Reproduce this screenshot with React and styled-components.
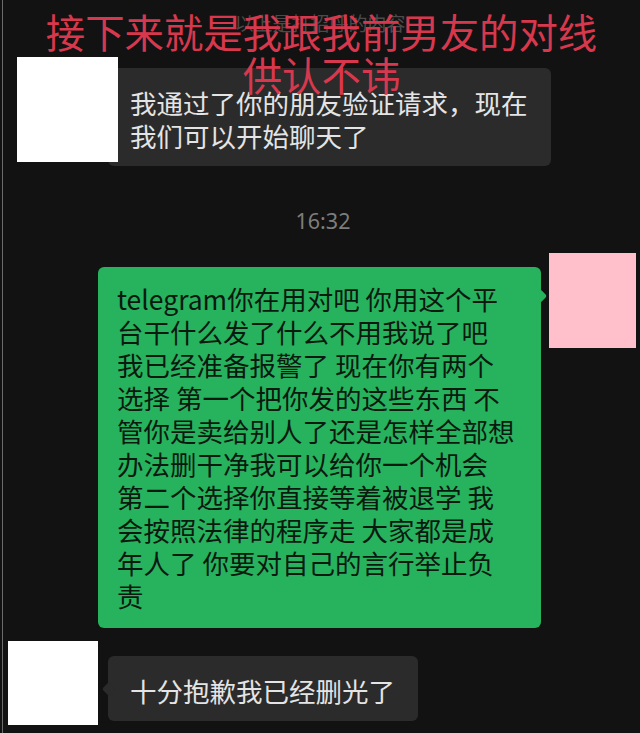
import React from "react";
import styled, { createGlobalStyle } from "styled-components";

const GREEN_LINES = [
  "telegram你在用对吧 你用这个平",
  "台干什么发了什么不用我说了吧",
  "我已经准备报警了 现在你有两个",
  "选择 第一个把你发的这些东西 不",
  "管你是卖给别人了还是怎样全部想",
  "办法删干净我可以给你一个机会",
  "第二个选择你直接等着被退学 我",
  "会按照法律的程序走 大家都是成",
  "年人了 你要对自己的言行举止负",
  "责",
];

const withBreaks = (lines) =>
  lines.map((line, i) => (
    <React.Fragment key={i}>
      {line}
      {i < lines.length - 1 && <br />}
    </React.Fragment>
  ));

export default function App() {
  return (
    <>
      <GlobalStyle />
      <Frame>
        <Caption>
          <CaptionLine>接下来就是我跟我前男友的对线</CaptionLine>
          <CaptionLine>供认不讳</CaptionLine>
        </Caption>

        <SystemNote>以上是打招呼的内容</SystemNote>

        <Row $top={22} $padLeft={17}>
          <Avatar $w={101} $h={105} $color="#ffffff" />
          <Bubble $tone="dark" $w={443} $top={11} $overlap={10}>
            {withBreaks(["我通过了你的朋友验证请求，现在", "我们可以开始聊天了"])}
          </Bubble>
        </Row>

        <TimeStamp>16:32</TimeStamp>

        <Row $top={20} $right $padRight={4}>
          <Bubble $tone="green" $w={443} $top={14}>
            {withBreaks(GREEN_LINES)}
          </Bubble>
          <Avatar $w={87} $h={95} $color="#ffc0cb" />
        </Row>

        <Row $top={13} $padLeft={8}>
          <Avatar $w={90} $h={84} $color="#ffffff" />
          <Bubble $tone="dark" $w={310} $top={15} $tail>
            十分抱歉我已经删光了
          </Bubble>
        </Row>
      </Frame>
    </>
  );
}

const GlobalStyle = createGlobalStyle`
  html, body {
    margin: 0;
    padding: 0;
    background: #121212;
  }
  body {
    font-family: "Noto Sans CJK SC", "Noto Sans", sans-serif;
  }
`;

const Frame = styled.div`
  position: relative;
  display: flex;
  flex-direction: column;
  width: 640px;
  height: 733px;
  overflow: hidden;
  background-color: #121212;

  &::before {
    content: "";
    position: absolute;
    left: 2px;
    top: 0;
    bottom: 0;
    width: 1px;
    background-color: #6c6c6c;
  }
`;

const Caption = styled.div`
  position: absolute;
  top: 9px;
  left: 3px;
  right: 0;
  z-index: 5;
  display: flex;
  flex-direction: column;
  align-items: center;
  pointer-events: none;
`;

const CaptionLine = styled.div`
  font-family: "Noto Sans CJK SC", sans-serif;
  font-size: 39.4px;
  line-height: 43px;
  color: #d8384d;
  white-space: nowrap;
`;

const SystemNote = styled.div`
  margin-top: 11px;
  text-align: center;
  font-size: 19px;
  line-height: 24px;
  color: #4a4a4a;
`;

const Row = styled.div`
  display: flex;
  align-items: flex-start;
  justify-content: ${(p) => (p.$right ? "flex-end" : "flex-start")};
  margin-top: ${(p) => p.$top}px;
  padding-left: ${(p) => p.$padLeft || 0}px;
  padding-right: ${(p) => p.$padRight || 0}px;
`;

const Avatar = styled.div`
  position: relative;
  z-index: 2;
  flex-shrink: 0;
  width: ${(p) => p.$w}px;
  height: ${(p) => p.$h}px;
  background-color: ${(p) => p.$color};
`;

const Bubble = styled.div`
  position: relative;
  box-sizing: border-box;
  width: ${(p) => p.$w}px;
  margin-top: ${(p) => p.$top}px;
  ${(p) =>
    p.$tone === "green"
      ? `
    margin-right: 8px;
    padding: 15px 10px 16px 19px;
    background-color: #27b25e;
    color: #0b1a0f;
  `
      : `
    margin-left: ${p.$overlap ? -p.$overlap : 10}px;
    padding: 18px 10px 14px 22px;
    background-color: #2b2b2b;
    color: #e4e4e4;
  `}
  border-radius: 6px;
  font-size: 26.5px;
  line-height: 33px;
  white-space: nowrap;

  &::after {
    content: "";
    position: absolute;
    top: ${(p) => (p.$tone === "green" ? 24 : 28)}px;
    width: 10px;
    height: 10px;
    background-color: inherit;
    transform: rotate(45deg);
    border-radius: 2px;
    display: ${(p) => (p.$tone === "green" || p.$tail ? "block" : "none")};
    ${(p) => (p.$tone === "green" ? "right: -4px;" : "left: -4px;")}
  }
`;

const TimeStamp = styled.div`
  margin-top: 43px;
  text-align: center;
  padding-left: 6px;
  font-family: "Noto Sans", sans-serif;
  font-size: 21.5px;
  line-height: 24px;
  color: #7d7d7d;
`;
